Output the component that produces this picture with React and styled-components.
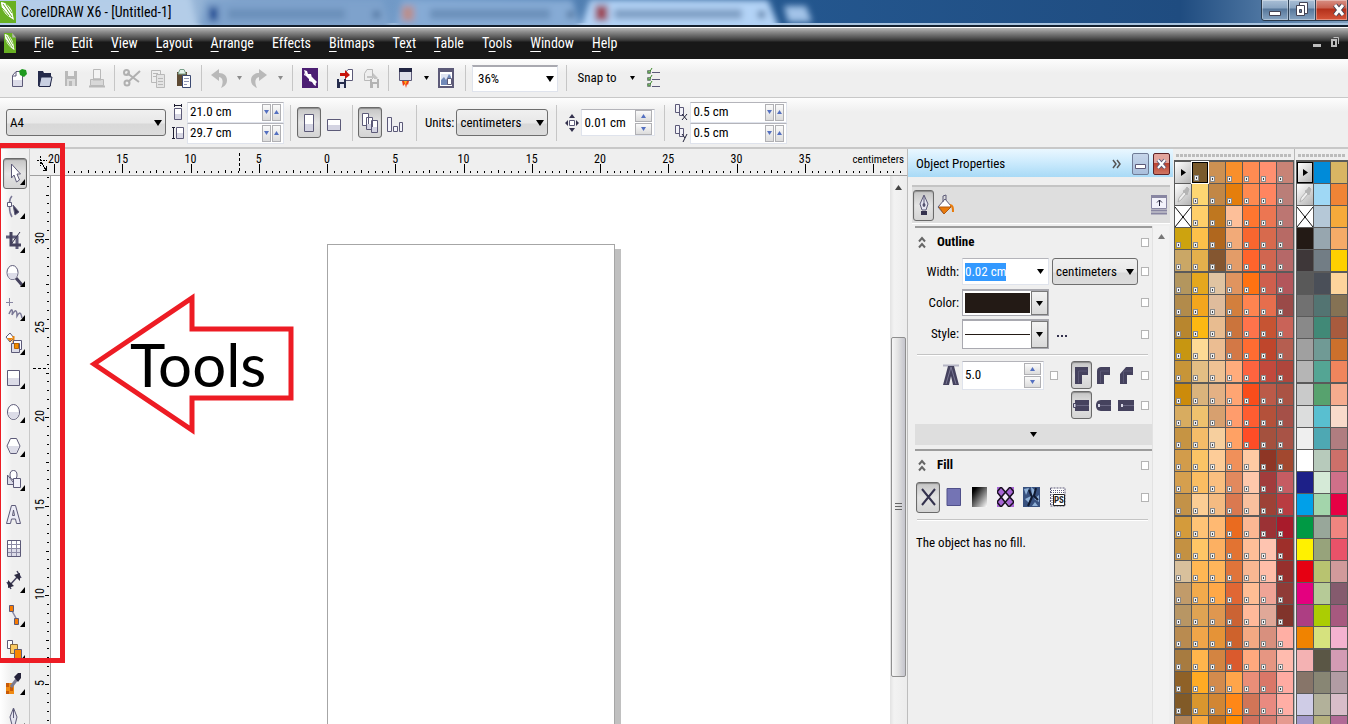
import React, { useEffect, useRef } from "react";
import styled, { createGlobalStyle, css } from "styled-components";

// ===== Data =====

const MENUS = [
  ["", "F", "ile"],
  ["", "E", "dit"],
  ["", "V", "iew"],
  ["", "L", "ayout"],
  ["", "A", "rrange"],
  ["Effe", "c", "ts"],
  ["", "B", "itmaps"],
  ["Te", "x", "t"],
  ["", "T", "able"],
  ["T", "o", "ols"],
  ["", "W", "indow"],
  ["", "H", "elp"],
];

const DOCUMENT_COLORS = `
7a5a2c cd9152 f98f2b ff8b52 ff9070 c88376
fdd672 c28746 e57e0c ff8a50 ff8560 ba7e78
ffcf6a bf771f fdbf99 ff7630 ec7652 bc7672
cda30f fdc04a b0671e f2aa78 f7662f d76a4d b76a65
caa766 e4b04c 845630 e39c68 ff642c d06650 b56868
b3965e e5a71e e0c4a2 e0945f ff7212 cf5f4d b2565b
b28b4b f4a61e dfbc9c d37f3d ff8450 e66e4d 9a4a48
b8862e fcb812 e8bc90 cb743c ff734b c65433 c96358
c79611 fdda95 ebbd92 d37846 ff6c32 bf462c b55e50
c79538 e3be84 efc294 ffac7c ff643f c2493c ae463c
cc8b0b dab37c e4b184 ffa573 f94d1b bb5a48 aa5344
d8ac60 efc26e d7a06f ff9c6c ff5d31 b4513a a55048
c69443 f4bc69 f6cf9e ffa164 ff4d27 a4513e a85346
d29c4b fbc466 fdcc98 f0905a fdcaa4 8e3625 a2482f
d59f4e fabd62 fabf80 e2895e fec8ab a13c3c c55c62
c39248 fbcd94 f4bb82 da7950 f9c09e 9d4136 b93c41
d49b3b fec376 ffb972 ea6b1f fbb793 9b3235 a81b2b
c49142 ffc666 fcb062 e27332 fdbe98 fec4b0 9e2f2a
d8c09c ffb754 ffb55b e0743a f8b792 ffbda8 962f2d
c19b6a f2aa4c ffa848 e06734 ffbd94 efa496 8f3b37
b89664 dfa353 df9750 cb6334 ffb99a e0a898 81342b
b98b50 f0a549 e59337 ce622c f3a983 d8907e ffafa4
a77b40 ffb54c d38441 da5a2d ffa97e e69682 ffbbae
8f6127 ffab24 d38b4d ffa54a ea8e78 da7768 ffaba2
815a27 d9962e d18634 ff8717 d17557 e98a80 ffaea5
b28458 f8a93e c07122 ff8a00 cf705c d57d70 e59a90
`;

const DEFAULT_COLORS = `
008bd9 d9b563
9fd8f5 f08436
b5c8d7 f6aa3b
231a15 97a6af f5ab68
3e3739 727d85 fdd000
595959 4a4f58 fdd49c
717171 537472 857254
898989 418977 a85b3e
a0a0a0 709a95 cc702c
b5b5b5 54a594 f0855d
c9caca 57a26e f6ab8e
dcdddd 59bfd0 f9dacb
efefef 4ea8b3 b07d80
ffffff b7cabb cd706a
1d2088 d5ead7 cf7089
00a0e9 a3d5ab e60044
009944 98a79a f08580
fff100 97a37b e95269
e60012 b8c370 d19a9b
e4007f b6ca97 855b6e
ad3e83 abcd03 a7597f
f08300 d6e27e f4b2d0
f4b2b3 5a5645 d39bb4
877569 888674 b19ca4
cfcce6 b2b19a d8bdc9
a399cb b5b07e b16a96
`;

const toRows = (text) =>
  text
    .trim()
    .split("\n")
    .map((line) => line.split(" ").map((c) => `#${c}`));

// ===== Global =====

const FONT = `"Roboto Condensed", Roboto, sans-serif`;

const GlobalStyle = createGlobalStyle`
  *, *::before, *::after {
    box-sizing: border-box;
  }

  body {
    margin: 0;
    font-family: ${FONT};
    font-size: 13px;
    line-height: 18px;
    color: #000;
    background: #efefef;
  }

  button, input, select {
    font: inherit;
    color: inherit;
    margin: 0;
    padding: 0;
  }

  button {
    white-space: nowrap;
  }

  svg {
    display: block;
    flex: none;
  }

  ::selection {
    background: #3399ff;
    color: #fff;
  }
`;

const App = styled.div`
  position: relative;
  display: flex;
  flex-direction: column;
  height: 100vh;
  overflow: hidden;
`;

// ===== Title bar =====

const TitleBar = styled.header`
  position: relative;
  display: flex;
  align-items: flex-start;
  height: 27px;
  flex: none;
  overflow: hidden;
  background: linear-gradient(90deg, #8fb0d2 0, #b4cce6 140px, #7fa3cb 240px, #6f98c6 420px, #5583b5 560px, #24578f 780px, #1f4c80 1180px, #4c74a0 1260px, #7d9dbd 100%);
  border-bottom: 2px solid #14202e;
  box-shadow: inset 0 -2px 0 #a9c4df;
`;

const TabGhosts = styled.svg`
  position: absolute;
  left: 0;
  top: 0;
`;

const AppTitle = styled.h1`
  position: relative;
  display: flex;
  align-items: center;
  gap: 5px;
  flex: 1;
  margin: 0;
  height: 23px;
  font-size: 14px;
  font-weight: 400;
`;

const WindowButtons = styled.div`
  position: relative;
  display: flex;
  height: 21px;
  border: 1px solid #2a3a4c;
  border-width: 0 0 1px 1px;
  border-radius: 0 0 0 4px;
  overflow: hidden;
`;

const WindowButton = styled.button`
  display: grid;
  place-items: center;
  width: ${(props) => (props.$close ? 32 : 27)}px;
  padding-left: ${(props) => (props.$close ? 14 : 0)}px;
  height: 20px;
  border: 0;
  border-right: 1px solid #2f4257;
  background: ${(props) =>
    props.$close
      ? "linear-gradient(#d78f84 0, #c8604f 8px, #b3301b 9px, #d6553a 100%)"
      : "linear-gradient(#a9bfd6 0, #8aa5c2 8px, #57779a 9px, #86a3c1 100%)"};
  box-shadow: inset 0 0 0 1px rgba(255, 255, 255, 0.35);
`;

// ===== Menu bar =====

const MenuBar = styled.nav`
  display: flex;
  align-items: center;
  height: 32px;
  flex: none;
  padding: 0 4px 2px;
  border-top: 1px solid #fff;
  background: linear-gradient(#b5b5b5 0, #8a8a8a 4px, #5a5a5a 9px, #303030 13px, #181818 14px);
`;

const MenuItem = styled.button`
  padding: 0 9px;
  border: 0;
  background: none;
  color: #fff;
  font-size: 14px;

  u {
    text-underline-offset: 3px;
  }
`;

const MenuItems = styled.div`
  display: flex;
  flex: 1;
  margin-left: 9px;
`;

const DocumentButton = styled.button`
  display: grid;
  place-items: center;
  width: 18px;
  height: 18px;
  border: 0;
  background: none;
`;

// ===== Toolbars =====

const Toolbar = styled.div`
  display: flex;
  align-items: center;
  flex: none;
  height: ${(props) => (props.$tall ? 51 : 39)}px;
  padding: 0 6px;
  background: linear-gradient(#fdfdfd 0, #efefef 14px);
  border-bottom: ${(props) => (props.$tall ? 2 : 1)}px solid #c8c8c8;
`;

const Separator = styled.i`
  flex: none;
  width: 1px;
  height: ${(props) => (props.$tall ? 36 : 26)}px;
  margin: 0 ${(props) => props.$space || 4}px;
  background: #c6c6c6;
`;

const pressed = css`
  border: 1px solid #6a6a6a;
  border-radius: 3px;
  background: linear-gradient(#c4c4c4, #e4e4e4 50%, #d4d4d4);
  box-shadow: inset 0 1px 1px #8a8a8a;
`;

const ToolButton = styled.button`
  display: grid;
  place-items: center;
  flex: none;
  width: ${(props) => props.$width || 26}px;
  height: 31px;
  border: 0;
  background: none;
  ${(props) => props.$on && pressed}
`;

const SelectBox = styled.span`
  position: relative;
  display: inline-flex;
  flex: none;
  width: ${(props) => props.$width}px;
  height: 27px;

  select {
    appearance: none;
    width: 100%;
    padding: 0 16px 0 3px;
    border: 1px solid #6e6e6e;
    border-radius: 3px;
    background: linear-gradient(#f0f0f0 0, #e8e8e8 13px, #d8d8d8 14px, #dcdcdc);
  }

  &::after {
    content: "";
    position: absolute;
    right: 4px;
    top: 11px;
    border: 4px solid transparent;
    border-top: 6px solid #000;
    border-bottom: 0;
    pointer-events: none;
  }

  ${(props) =>
    props.$flat &&
    css`
      select {
        padding-left: 5px;
        border: 1px solid #dfe3ec;
        border-top: 2px solid #a9a9b0;
        border-radius: 0;
        background: #fff;
      }
    `}
`;

const Field = styled.span`
  display: flex;
  align-items: center;
  flex: none;
  width: ${(props) => props.$width}px;
  height: ${(props) => props.$height}px;
  padding: 0 2px;
  border: 1px solid #dfe3ec;
  border-top-color: #b4b4ba;
  background: #fff;

  input {
    flex: 1;
    min-width: 0;
    height: 18px;
    border: 0;
    outline: 0;
    background: none;
  }
`;

const Spinners = styled.span`
  display: flex;
  flex-direction: ${(props) => (props.$stacked ? "column" : "row")};
  gap: 1px;
`;

const Spin = styled.button`
  display: grid;
  place-items: center;
  width: ${(props) => (props.$wide ? 17 : 9)}px;
  height: ${(props) => (props.$wide ? 12 : 17)}px;
  border: 1px solid #b0b0b4;
  background: linear-gradient(#fafafa, #dcdcdc);
`;

const PairStack = styled.div`
  display: grid;
  grid-template-columns: auto auto;
  align-items: center;
  column-gap: 2px;
`;

const Label = styled.label`
  text-align: right;
`;

// ===== Work area =====

const WorkArea = styled.main`
  display: flex;
  flex: 1;
  min-height: 0;
`;

const Toolbox = styled.aside`
  display: flex;
  flex-direction: column;
  flex: none;
  width: 30px;
  padding: 8px 0 0 3px;
  overflow: hidden;
  border-right: 1px solid #c8c8c8;
  background: linear-gradient(90deg, #fff, #efefef 12px);
`;

const Tool = styled.button`
  display: grid;
  place-items: center;
  flex: none;
  width: 24px;
  height: 31px;
  margin: 1px 0 2px;
  border: 0;
  background: none;
  ${(props) => props.$on && pressed}
`;

const Drawing = styled.section`
  display: grid;
  grid-template-columns: 21px 1fr 17px;
  grid-template-rows: 27px 1fr;
  flex: 1;
  min-width: 0;
  background: #efefef;
`;

const HorizontalRuler = styled.div`
  grid-column: 1 / -1;
  overflow: hidden;
  border-bottom: 1px solid #a0a0a0;
`;

const VerticalRuler = styled.div`
  overflow: hidden;
  border-right: 1px solid #a0a0a0;
`;

const RulerText = styled.text`
  font-family: ${FONT};
  font-size: ${(props) => (props.$unit ? 11 : 12)}px;
  text-anchor: ${(props) => (props.$unit ? "end" : "middle")};
`;

const Canvas = styled.div`
  position: relative;
  overflow: hidden;
  background: #fff;
`;

const Paper = styled.div`
  position: absolute;
  left: 276px;
  top: 68px;
  width: 288px;
  height: 530px;
  border: 1px solid #a6a6a6;
  background: #fff;
  box-shadow: 6px 5px 0 #c0c0c0;
`;

const ScrollTrack = styled.div`
  display: flex;
  flex-direction: column;
  align-items: center;
  padding-top: 9px;
  background: linear-gradient(90deg, #e2e2e2, #f2f2f2 4px, #ececec);
`;

const ScrollThumb = styled.div`
  display: grid;
  place-items: center;
  width: 15px;
  height: 340px;
  margin-top: 147px;
  border: 1px solid #8f8f8f;
  border-radius: 2px;
  background: linear-gradient(90deg, #f6f6f6, #e2e2e2 6px, #c4c4cc);
`;

// ===== Docker =====

const Docker = styled.aside`
  display: flex;
  flex-direction: column;
  flex: none;
  width: 266px;
  border-left: 1px solid #bdbdbd;
`;

const DockerTitle = styled.div`
  display: flex;
  align-items: center;
  gap: 4px;
  height: 28px;
  padding: 2px 3px 0 8px;
  background: linear-gradient(#eaf7ff, #cdebfd 13px, #a8daf6);

  h2 {
    flex: 1;
    margin: 0;
    font-size: 13px;
    font-weight: 400;
  }
`;

const DockerButton = styled.button`
  display: grid;
  place-items: center;
  width: ${(props) => (props.$bare ? 22 : 17)}px;
  height: 22px;
  border: ${(props) => (props.$bare ? "0" : "1px solid")};
  border-color: ${(props) => (props.$red ? "#5c2226" : "#707c96")};
  border-radius: 2px;
  background: ${(props) =>
    props.$bare ? "none" : props.$red ? "linear-gradient(#e2a49c 9px, #b9412f 9px, #cf7562)" : "linear-gradient(#c6d6ea, #a9bfdc)"};
`;

const DockerTabs = styled.div`
  display: flex;
  align-items: center;
  height: 39px;
  margin: 8px 3px 0 4px;
  padding: 0 1px;
  border-top: 2px solid #c4c4c4;
  border-bottom: 1px solid #fff;
  background: #dedede;

  button:last-child {
    margin-left: auto;
  }
`;

const DockerBody = styled.div`
  display: flex;
  flex: 1;
  margin: 2px 4px 0 7px;
  min-height: 0;
`;

const DockerContent = styled.div`
  flex: 1;
  min-width: 0;
`;

const DockerScroll = styled.div`
  flex: none;
  width: 17px;
  padding: 8px 0 0 5px;
  border-left: 1px solid #e2e2e2;
  background: #f2f2f2;
`;

const Section = styled.section`
  border-top: 2px solid #9c9c9c;
`;

const SectionHead = styled.div`
  display: flex;
  align-items: center;
  height: 28px;
  padding: 0 3px;

  h3 {
    flex: 1;
    margin: 0 0 0 11px;
    font-size: 13px;
    font-weight: 700;
  }
`;

const Mark = styled.input`
  appearance: none;
  flex: none;
  width: 8px;
  height: 9px;
  margin-left: auto;
  border: 1px solid #b4b4b4;
  background: #fff;
`;

const FormRow = styled.div`
  display: grid;
  grid-template-columns: 44px 87px 86px 1fr;
  align-items: center;
  column-gap: 3px;
  height: ${(props) => props.$height}px;
  padding-right: 3px;
`;

const ColorCombo = styled.button`
  display: flex;
  align-items: center;
  justify-content: space-between;
  width: 87px;
  height: ${(props) => props.$height}px;
  padding-left: 2px;
  border: 1px solid #a9a9b0;
  border-width: 2px 1px 1px;
  background: #fff;
`;

const Swatch = styled.span`
  width: 65px;
  height: ${(props) => (props.$line ? 1 : 20)}px;
  background: #231a15;
`;

const DropCap = styled.span`
  display: grid;
  place-items: center;
  align-self: stretch;
  width: 17px;
  border: 1px solid #7a7a7a;
  background: linear-gradient(#f2f2f2, #dadada);
`;

const Rule = styled.hr`
  height: 2px;
  margin: ${(props) => props.$space || 0}px 4px 0 2px;
  border: 0;
  border-top: 1px solid #c4c4c4;
  border-bottom: 1px solid #fff;
`;

const StrokeOptions = styled.div`
  display: grid;
  grid-template-columns: 1fr auto;
  padding: 4px 3px 4px 28px;
`;

const MiterRow = styled.div`
  display: flex;
  align-items: center;
  gap: 3px;
  height: 30px;

  input[type="checkbox"] {
    margin-left: 3px;
  }
`;

const JoinRow = styled.div`
  display: flex;
  align-items: center;
  height: 30px;
  grid-column: 2;

  button {
    width: 23px;
    height: 28px;
  }

  button:first-child {
    width: 21px;
  }

  input {
    margin-left: 3px;
  }
`;

const Expander = styled.button`
  display: grid;
  place-items: center;
  width: 100%;
  height: 21px;
  margin-bottom: 4px;
  border: 0;
  background: #dedede;
`;

const FillRow = styled.div`
  display: flex;
  align-items: center;
  height: 36px;
  padding: 0 3px 0 1px;

  button {
    margin-right: 1px;
  }
`;

const Note = styled.p`
  margin: 13px 0 0 1px;
`;

// ===== Palette =====

const PaletteBox = styled.aside`
  flex: none;
  overflow: hidden;
  padding-left: 1px;
  border-left: ${(props) => (props.$divided ? 1 : 0)}px solid #b8b8b8;
`;

const PaletteGrip = styled.div`
  height: 3px;
  margin: 5px 2px 3px;
  background: repeating-linear-gradient(90deg, #bcbcbc 0 3px, transparent 3px 4px);
`;

const Swatches = styled.div`
  padding: 2px 1px 0 1px;
  background: #5a5a5a;
`;

const SwatchRow = styled.div`
  display: flex;
  gap: 1px;
  height: 21px;
  margin-bottom: ${(props) => (props.$gap ? 2 : 1)}px;
`;

const ColorCell = styled.button`
  display: flex;
  align-items: flex-end;
  width: 16px;
  height: 21px;
  padding: 0 0 1px 1px;
  border: 0;
  ${(props) =>
    props.$selected &&
    css`
      border: 1px solid #000;
      outline: 1px solid #fff;
    `}
`;

const SpotMark = styled.i`
  width: 5px;
  height: 6px;
  border: 1px solid #8a8a8a;
  background: linear-gradient(#444, #444) center / 1px 2px no-repeat #eee;
`;

const PaletteButton = styled.button`
  display: grid;
  place-items: center;
  width: 16px;
  height: 21px;
  border: ${(props) => (props.$boxed ? "1px solid #000" : "0")};
  background: ${(props) => (props.$plain ? "#fff" : "linear-gradient(135deg, #fff, #b4b4b4)")};
`;

// ===== Annotations =====

const ToolboxFrame = styled.div`
  position: absolute;
  left: -4px;
  top: 143px;
  width: 69px;
  height: 520px;
  border: 5px solid #ed1c24;
  pointer-events: none;
`;

const Callout = styled.div`
  position: absolute;
  left: 86px;
  top: 293px;
  display: grid;
  align-items: center;
  pointer-events: none;

  > * {
    grid-area: 1 / 1;
  }

  span {
    padding-left: 44px;
    font-family: Lato, sans-serif;
    font-size: 60px;
    line-height: 60px;
  }
`;

// ===== Icons =====

const INK = "#5c5a78";
const GREY = "#b9b9b9";

const Icon = ({ w = 18, h = 22, children, ...rest }) => (
  <svg width={w} height={h} viewBox={`0 0 ${w} ${h}`} fill="none" stroke={INK} aria-hidden="true" {...rest}>
    {children}
  </svg>
);

const Down = ({ size = 3, color = "#000" }) => (
  <Icon w={size * 2 + 1} h={size + 2} stroke="none">
    <path d={`M0 0H${size * 2 + 1}L${size + 0.5} ${size + 2}Z`} fill={color} />
  </Icon>
);

const Up = ({ size = 3, color = "#000" }) => (
  <Icon w={size * 2 + 1} h={size + 2} stroke="none">
    <path d={`M0 ${size + 2}H${size * 2 + 1}L${size + 0.5} 0Z`} fill={color} />
  </Icon>
);

const CorelLogo = ({ w = 16, h = 22, notch }) => (
  <Icon w={w} h={h} viewBox="0 0 16 22" preserveAspectRatio="none" stroke="none">
    <path d={notch ? "M0 0H11L16 5V22H0Z" : "M0 0H16V22H0Z"} fill="#68b022" />
    <path d="M1 1C5 1 10 5 12 10L14 19L8 15C4 12 1 7 1 1Z" fill="#fff" />
    <path d="M3 3L12 16M6 3L12 12M2 7L9 15" stroke="#68b022" strokeWidth="1" />
    {notch && <path d="M11 0V5H16Z" fill="#b5b5b5" />}
  </Icon>
);

const NewIcon = () => (
  <Icon>
    <path d="M2.500 8.500L6 4.500H12.500V19.500H2.500Z" fill="#fff" />
    <path d="M3 13H12V19H3Z" fill="#dcdce8" stroke="none" />
    <path d="M2.500 9H6V5" />
    <path d="M12 2l4 1 1 4-3 3-4-2-1-4z" fill="#1f9a1f" stroke="none" />
  </Icon>
);

const OpenIcon = () => (
  <Icon>
    <path d="M2 4H7L8 6H15V19H2Z" fill="#242a4a" stroke="none" />
    <path d="M5 10H16L14 19.500H3Z" fill="#c9d0e2" stroke="#242a4a" />
  </Icon>
);

const SaveIcon = () => (
  <Icon stroke="none">
    <path d="M3 4H15V19H3Z" fill={GREY} />
    <path d="M6 4H12V9H6Z" fill="#efefef" />
    <path d="M5 12H13V19H5Z" fill="#dcdcdc" />
    <path d="M7 14H10V19H7Z" fill={GREY} />
  </Icon>
);

const PrintIcon = () => (
  <Icon stroke={GREY}>
    <path d="M5.500 2.500H12.500V12H5.500Z" fill="#f4f4f4" />
    <path d="M2.500 12.500H15.500V18.500H2.500Z" fill="#d8d8d8" />
    <path d="M1 19.500H17M5 12.500H13" strokeWidth="2" />
  </Icon>
);

const CutIcon = () => (
  <Icon stroke="#b0b0b0" strokeWidth="2">
    <path d="M4 6L16 15M17 4L5 15" />
    <ellipse cx="3.500" cy="5.500" rx="2.500" ry="2.500" />
    <ellipse cx="4" cy="16" rx="2.500" ry="2.500" />
  </Icon>
);

const CopyIcon = () => (
  <Icon stroke={GREY}>
    <path d="M2.500 3.500H11.500V15.500H2.500Z" fill="#eee" />
    <path d="M7.500 7.500H15.500V20.500H7.500Z" fill="#e4e4e4" />
    <path d="M4 6.500H9M4 9.500H7M9 11.500H14M9 14.500H14M9 17.500H14" />
  </Icon>
);

const PasteIcon = () => (
  <Icon>
    <path d="M2 5H12V19H2Z" fill="#5d4a33" stroke="none" />
    <path d="M3 7L5 2.500H9L11 7Z" fill="#e5f3ea" stroke="#7aa08a" />
    <path d="M7.500 8.500H15.500V20.500H7.500Z" fill="#fff" stroke="#3c4a72" />
    <path d="M9 11.500H14M9 14.500H14M9 17.500H12" stroke="#8f97b8" />
  </Icon>
);

const UndoIcon = ({ flip }) => (
  <Icon stroke="none">
    <g transform={flip ? "translate(18 0) scale(-1 1)" : undefined}>
      <path d="M1 8L9 2V6C14 6 17 9 17 13C17 17 15 19 11 21C13 17 14 11 9 10V14Z" fill={GREY} />
    </g>
  </Icon>
);

const ConnectIcon = () => (
  <Icon stroke="none">
    <path d="M1 1H17V21H1Z" fill="#4c1f73" />
    <path d="M3 3L6 4L7 7L10 7L11 11L8 12L5 9Z" fill="#fff" />
    <path d="M15 19L13 18L11 15L8 14L8 11L11 10L14 13Z" fill="#fff" />
    <path d="M4 5L3 8L5 9ZM14 17L16 15L14 13Z" fill="#fff" />
  </Icon>
);

const ImportIcon = () => (
  <Icon>
    <path d="M9.500 5.500L12 2.500H16.500V13.500H9.500Z" fill="#fff" />
    <path d="M4 6H9V3L14 8L9 12V9H4Z" fill="#c8140c" stroke="none" />
    <path d="M1 12H10V21H1Z" fill="#252c4c" stroke="none" />
    <path d="M3 12H8V15H3ZM4 17H8V21H4Z" fill="#e4e6f0" stroke="none" />
  </Icon>
);

const ExportIcon = () => (
  <Icon stroke={GREY}>
    <path d="M2.500 6.500L5 2.500H10.500V13.500H2.500Z" fill="#eee" />
    <path d="M5 9H11V6L16 11L12 14V11H5Z" fill="#c4c4c4" stroke="none" />
    <path d="M8 12H17V21H8Z" fill="#b4b4b4" stroke="none" />
    <path d="M10 12H15V15H10ZM11 17H15V21H11Z" fill="#eee" stroke="none" />
  </Icon>
);

const LaunchIcon = () => (
  <Icon>
    <path d="M2.500 1.500H14.500V13.500H2.500Z" fill="#dfe1ea" />
    <path d="M2 1H15V5H2Z" fill="#222644" stroke="none" />
    <path d="M5 14H12L11 18L10 17L9 21L8 17L6 19Z" fill="#f13b12" stroke="none" />
    <path d="M7 14H10L8.500 18Z" fill="#ffb21c" stroke="none" />
  </Icon>
);

const WelcomeIcon = () => (
  <Icon>
    <path d="M2 2H16V20H2Z" fill="#fff" strokeWidth="2" />
    <path d="M2 2H16V5H2Z" fill={INK} stroke="none" />
    <path d="M4 7H14V18H4Z" fill="#dfe4f2" stroke="none" />
    <path d="M4 13L7 10L9 13L12 7L14 10V18H4Z" fill="#7089b8" stroke="none" />
    <path d="M10.500 11.500H14.500V17.500H10.500Z" fill="#fff" />
  </Icon>
);

const ChecksIcon = () => (
  <Icon w={14} h={20}>
    <path d="M6 4.500H14M6 11.500H14M6 18.500H14" />
    <path d="M1.500 2.500H4.500V5.500H1.500ZM1.500 9.500H4.500V12.500H1.500ZM1.500 15.500H4.500V18.500H1.500Z" stroke="#7a8a80" />
    <path d="M2 3L3 5L6 0M2 10L3 12L6 7M2 16L3 18L6 13" stroke="#3c8a2a" />
  </Icon>
);

const PageSizeIcon = ({ high }) => (
  <Icon w={14} h={18}>
    <path d={high ? "M5.500 3.500H12.500V14.500H5.500Z" : "M3.500 5.500H10.500V16.500H3.500Z"} fill="#fff" />
    <path d={high ? "M6 9H12V14H6Z" : "M4 11H10V16H4Z"} fill="#d8d8e4" stroke="none" />
    <path d={high ? "M2.500 3V15M1 3.500H4M1 14.500H4" : "M3 2.500H11M3.500 1V4M10.500 1V4"} stroke="#1c1c30" />
  </Icon>
);

const SheetIcon = ({ wide }) => (
  <Icon w={16} h={20}>
    <path d={wide ? "M1.500 6.500H14.500V17.500H1.500Z" : "M3.500 1.500H12.500V18.500H3.500Z"} fill="#fff" />
    <path d={wide ? "M2 12H14V17H2Z" : "M4 11H12V18H4Z"} fill="#d4d4e2" stroke="none" />
  </Icon>
);

const AllPagesIcon = () => (
  <Icon w={18} h={22}>
    <path d="M1.500 1.500H7.500V13.500H1.500ZM5.500 5.500H11.500V17.500H5.500ZM10.500 8.500H16.500V20.500H10.500Z" fill="#fff" />
    <path d="M6 12H10V17H6ZM11 15H16V20H11Z" fill="#d4d4e2" stroke="none" />
  </Icon>
);

const ThisPageIcon = () => (
  <Icon w={18} h={20}>
    <path d="M1.500 4.500H5.500V18.500H1.500ZM7.500 13.500H11.500V18.500H7.500ZM13.500 9.500H16.500V18.500H13.500Z" fill="#f4f4fa" />
  </Icon>
);

const NudgeIcon = () => (
  <Icon w={14} h={18} stroke="none" fill="#34324e">
    <path d="M7 0L10 4H4ZM7 18L10 14H4ZM0 9L3 6V12ZM14 9L11 6V12Z" />
    <path d="M4.500 6.500H9.500V11.500H4.500Z" fill="#fff" stroke={INK} />
  </Icon>
);

const DuplicateIcon = ({ axis }) => (
  <Icon w={14} h={18}>
    <path d="M1.500 1.500H5.500V9.500H1.500ZM5.500 4.500H9.500V12.500H5.500Z" fill="#f2f2f8" />
    <path d={axis === "x" ? "M8 11L13 17M13 11L8 17" : "M8 10L11 14L13 10M11 14L9 18"} stroke="#22223a" />
  </Icon>
);

const NoneIcon = () => (
  <Icon w={16} h={20} stroke="#111">
    <path d="M0 0L16 20M16 0L0 20" />
    <path d="M7 9H9V11H7Z" fill="#111" stroke="none" />
  </Icon>
);

const DropperIcon = () => (
  <Icon w={14} h={18} stroke="#b4b4b4">
    <path d="M2 16L3 12L8 6L10 8L5 14Z" fill="#eee" />
    <path d="M7 5L9 4L11 1L13 3L12 6L11 9Z" fill="#b4b4b4" />
  </Icon>
);

const NibIcon = () => (
  <Icon w={14} h={22}>
    <path d="M7 1L3 10L5 16H9L11 10Z" fill="#e4e4f0" />
    <path d="M7 2V11" />
    <path d="M4 17H10V21H4Z" fill="#34324e" stroke="none" />
    <ellipse cx="7" cy="11" rx="1" ry="1.500" fill="#34324e" />
  </Icon>
);

const BucketIcon = () => (
  <Icon w={18} h={22}>
    <path d="M8 5L14 12L7 20L1 13Z" fill="#fff" />
    <path d="M2 13H14L7 20Z" fill="#e87b0c" stroke="#b35a10" />
    <path d="M6 8V2L9 1V6" />
    <path d="M13 11C16 11 16 14 16 18" stroke="#e87b0c" strokeWidth="2" />
  </Icon>
);

const PinIcon = () => (
  <Icon w={17} h={20}>
    <path d="M0.500 0.500H15.500V13.500H0.500Z" fill="#f2f2fa" stroke="#8886a2" />
    <path d="M0 0H16V3H0Z" fill="#8886a2" stroke="none" />
    <path d="M8.500 5V11M6 7.500L8.500 5L11 7.500" stroke="#22223a" />
    <path d="M0 15.500H16M0 18.500H16" stroke="#8886a2" strokeWidth="2" />
  </Icon>
);

const ChevronsUp = () => (
  <Icon w={8} h={13} stroke="#666" strokeWidth="2">
    <path d="M1 5.500L4 2L7 5.500M1 11.500L4 8L7 11.500" />
  </Icon>
);

const MiterIcon = () => (
  <Icon w={16} h={22} stroke="none">
    <path d="M0 1.500H16" stroke="#b4b4c4" strokeWidth="2" />
    <path d="M5 2H11L16 21H10L8 12L6 21H0Z" fill="#45425e" />
    <path d="M8 3L3 20M8 3L13 20" stroke="#7a7894" />
  </Icon>
);

const JOINS = ["M2 2H15V10H9V19H2Z", "M2 19V6C2 3 4 2 6 2H15V10H9V19Z", "M2 19V9L8 2H15V10H9V19Z"];

const JoinIcon = ({ kind }) => (
  <Icon w={17} h={20} stroke="none">
    <path d={JOINS[kind]} fill="#45425e" />
    <path d="M5.500 18V6H14" stroke="#5a5774" fill="none" />
  </Icon>
);

const CAPS = ["M2 1H16V12H2Z", "M6 1H16V12H6C2 12 1 9 1 6.500C1 4 2 1 6 1Z", "M0 1H16V12H0Z"];

const CapIcon = ({ kind }) => (
  <Icon w={17} h={13} stroke="none">
    <path d={CAPS[kind]} fill="#45425e" />
    <path d="M3 6.500H16" stroke="#6b6884" />
    <path d={kind === 0 ? "M0.500 4.500H3V8.500H0.500Z" : "M3 5H5V8H3Z"} fill="#d8d8e6" stroke={kind === 0 ? "#45425e" : "none"} />
  </Icon>
);

const FillIcon = ({ kind }) => (
  <Icon w={17} h={20} stroke="none">
    <defs>
      <linearGradient id="fountain" x1="0" y1="0" x2="1" y2="1">
        <stop offset="0.150" stopColor="#000" />
        <stop offset="1" stopColor="#fff" />
      </linearGradient>
    </defs>
    {kind === "none" && <path d="M2 2L15 18M15 2L2 18" stroke="#34324e" strokeWidth="2" />}
    {kind === "uniform" && <path d="M2 1.500H15.500V18.500H2Z" fill="#7474b4" stroke="#50508a" />}
    {kind === "fountain" && <path d="M1 0H16V20H1Z" fill="url(#fountain)" />}
    {kind === "pattern" && (
      <>
        <path d="M0 0H17V20H0Z" fill="#a866d6" />
        <path d="M4 0H13L8.500 6ZM4 20H13L8.500 14ZM0 5L4 10L0 15ZM8.500 5L12 10L8.500 15L5 10ZM17 5L13 10L17 15Z" fill="#f4ecfa" />
        <path d="M0 5L4 0M0 5L12 20M4 20L17 5M0 15L13 0M4 0L17 15M17 5L13 0M0 15L4 20M12 20L17 15" stroke="#18101f" strokeWidth="1.500" />
      </>
    )}
    {kind === "texture" && (
      <>
        <path d="M0 0H17V20H0Z" fill="#38517f" />
        <path d="M1 2L6 1L3 8ZM8 0L13 4L9 9ZM2 12L8 9L6 16ZM11 12L16 8V15ZM9 19L12 15L15 19Z" fill="#8fb0d6" />
        <path d="M6 3L9 10L5 19M13 1L11 9L15 13" stroke="#101a30" strokeWidth="2" />
      </>
    )}
    {kind === "ps" && (
      <>
        <path d="M1.500 1H16V19H1.500Z" fill="#fff" stroke={INK} strokeDasharray="2 1" />
        <path d="M2 3.500H16M2 5.500H16M3 7V19" stroke={INK} strokeDasharray="1 1" />
        <path d="M4.500 7.500H15.500V18.500H4.500Z" fill="#fff" stroke="#222" />
        <text x="5" y="16" fontSize="9" fontFamily={FONT} fontWeight="700" fill="#222">
          PS
        </text>
      </>
    )}
  </Icon>
);

// Toolbox glyphs share one box, the black corner marks a flyout
const ToolIcon = ({ flyout = true, children }) => (
  <Icon w={20} h={26}>
    {children}
    {flyout && <path d="M20 18V24H15Z" fill="#000" stroke="none" />}
  </Icon>
);

const HALF = { fill: "#dcdce8", stroke: "none" };

const TOOLS = [
  ["Pick", <path d="M6.500 3V17L9 14L11.500 21L14.500 19L12 13H15.500Z" fill="#fff" />],
  [
    "Shape",
    <>
      <path d="M7 1C5 3 4.500 6 4.500 8M4.500 12C4.500 16 5 19 7 22" stroke="#7a7896" strokeWidth="1.500" />
      <path d="M2.500 7.500H6.500V11.500H2.500Z" fill="#fff" />
      <path d="M8 10L14 17L10 20Z" fill="#34324e" />
    </>,
  ],
  [
    "Crop",
    <>
      <path d="M1 8H12V20" strokeWidth="3" />
      <path d="M6 3V16H16" strokeWidth="3" stroke="#45425e" />
      <path d="M15 3L7 14" stroke="#34324e" />
    </>,
  ],
  [
    "Zoom",
    <>
      <path d="M11 15L17 22" strokeWidth="3" stroke="#45425e" />
      <ellipse cx="7.500" cy="9.500" rx="5.500" ry="7" fill="#fff" />
      <path d="M2.500 10H12.500C12 14 10 16 7.500 16C5 16 3 14 2.500 10Z" {...HALF} />
    </>,
  ],
  [
    "Freehand",
    <>
      <path d="M4.500 1V9M1 5.500H8" stroke="#8886a2" />
      <path d="M4 17C7 10 8 13 7 18C11 11 12 14 12 19C15 14 16 16 17 21" strokeWidth="1.500" stroke="#7a7896" />
    </>,
  ],
  [
    "Smart Fill",
    <>
      <path d="M5 2L9 7L5 11L1 6Z" fill="#fff" />
      <path d="M2 7H8L5 10.500Z" fill="#e8850f" stroke="none" />
      <path d="M8.500 5V12" stroke="#e8850f" strokeWidth="2" />
      <path d="M8.500 9.500H16.500V18.500H8.500Z" fill="#f8f8ff" />
      <path d="M6.500 12.500H14.500V21.500H6.500Z" fill="#dcdce8" />
      <path d="M9.500 12.500H13.500V17.500H9.500Z" fill="#f18a00" stroke="#b96500" />
    </>,
  ],
  [
    "Rectangle",
    <>
      <path d="M2.500 5.500H14.500V20.500H2.500Z" fill="#fff" />
      <path d="M3 13H14V20H3Z" {...HALF} />
    </>,
  ],
  [
    "Ellipse",
    <>
      <ellipse cx="8.500" cy="13" rx="6" ry="7.500" fill="#fff" />
      <path d="M3 13H14C14 17 11 20 8.500 20C6 20 3 17 3 13Z" {...HALF} />
    </>,
  ],
  [
    "Polygon",
    <>
      <path d="M5.500 5.500H11.500L15 13L11.500 20.500H5.500L2 13Z" fill="#fff" />
      <path d="M3 13H14L11 20H6Z" {...HALF} />
    </>,
  ],
  [
    "Basic Shapes",
    <>
      <path d="M2.500 8L10 17.500H2.500Z" fill="#dcdce8" />
      <ellipse cx="8.500" cy="8" rx="3.500" ry="4.500" fill="#fff" />
      <path d="M8.500 11.500H15.500V20.500H8.500Z" fill="#f2f2fa" />
    </>,
  ],
  ["Text", <path d="M6.500 4.500H10.500L15.500 22.500H11.500L10.500 18H6.500L5.500 22.500H1.500ZM8.500 9L7.500 14.500H9.500Z" fill="#ececf6" />, false],
  [
    "Table",
    <>
      <path d="M2.500 5.500H15.500V21.500H2.500Z" fill="#fff" />
      <path d="M3 13H15V21H3Z" {...HALF} />
      <path d="M3 9.500H15M3 13.500H15M3 17.500H15M6.500 6V21M11.500 6V21" stroke="#8d8ba6" />
    </>,
    false,
  ],
  [
    "Dimension",
    <>
      <path d="M4 17L14 6M12 2L16 9M2 13L6 20" stroke="#45425e" strokeWidth="1.500" />
      <path d="M9 6L15 4L15 12ZM9 17L3 19L3 11Z" stroke="none" fill="#2c2a40" />
    </>,
  ],
  [
    "Connector",
    <>
      <path d="M6 6L12 17" stroke="#8886a2" strokeWidth="1.500" />
      <path d="M4.500 2.500H8.500V8.500H4.500ZM9.500 15.500H13.500V21.500H9.500Z" fill="#f77a00" />
    </>,
  ],
  [
    "Blend",
    <>
      <path d="M2.500 3.500H7.500V11.500H2.500Z" fill="#fff" />
      <path d="M5.500 7.500H12.500V16.500H5.500Z" fill="#fccb63" stroke="#8a6a3c" />
      <path d="M9.500 12.500H16.500V21.500H9.500Z" fill="#f88600" />
    </>,
  ],
  [
    "Color Eyedropper",
    <>
      <path d="M1 12H9V23H1Z" fill="#f08a12" stroke="none" />
      <path d="M1 12H4V16H1ZM5 16H8V20H5ZM1 20H4V23H1Z" fill="#c85a08" stroke="none" />
      <path d="M6 16L12 8" stroke="#7b7a90" strokeWidth="3" />
      <path d="M9 6L13 2H16V7L13 11Z" fill="#25233a" stroke="none" />
    </>,
  ],
  [
    "Outline Pen",
    <>
      <path d="M8.500 3L5 12L7 20H10L12 12Z" fill="#e4e4f0" />
      <path d="M8.500 4V13" />
    </>,
  ],
];

// ===== Rulers =====

const CM_X = 13.65;
const CM_Y = 17.8;

// Origin of the sheet, measured from each ruler's own start
const ORIGIN_X = 297;
const ORIGIN_Y = 597;

const range = (from, to) => Array.from({ length: to - from + 1 }, (_, i) => from + i);

const RulerX = () => (
  <Icon w={1600} h={26} stroke="#000" shapeRendering="crispEdges">
    {range(-38, 100).map((n) => {
      const x = Math.round(ORIGIN_X + (n * CM_X) / 2) + 0.5;
      const top = n % 10 === 0 ? 15 : n % 5 === 0 ? 21 : 22;
      return <path key={n} d={`M${x} ${top}V24`} />;
    })}
    <path d="M24.500 15V24" />
    {range(-4, 7).map((n) => (
      <RulerText key={n} x={ORIGIN_X + n * 5 * CM_X} y={14} stroke="none" fill="#000">
        {Math.abs(n * 5)}
      </RulerText>
    ))}
    <RulerText x={874} y={14} $unit stroke="none" fill="#000">
      centimeters
    </RulerText>
    <path d="M209.500 4V24" strokeDasharray="3 2" />
    <path d="M7 11.500H17M10.500 7V17" strokeDasharray="2 1" />
    <path d="M11 13L16 21M16.500 17V22M13 21.500H17" />
  </Icon>
);

const RulerY = () => (
  <Icon w={20} h={1200} stroke="#000" shapeRendering="crispEdges">
    {range(-60, 67).map((n) => {
      const y = Math.round(ORIGIN_Y - (n * CM_Y) / 2) + 0.5;
      const left = n % 10 === 0 ? 15 : n % 5 === 0 ? 16 : 17;
      return <path key={n} d={`M${left} ${y}H19`} />;
    })}
    {range(1, 6).map((n) => (
      <RulerText key={n} transform={`translate(14 ${ORIGIN_Y - n * 5 * CM_Y - 1}) rotate(-90)`} stroke="none" fill="#000">
        {n * 5}
      </RulerText>
    ))}
    <path d="M3 192.500H19" strokeDasharray="3 2" />
  </Icon>
);

// ===== Parts =====

const Select = ({ label, id, options, ...rest }) => (
  <SelectBox {...rest}>
    <select id={id} aria-label={label}>
      {options.map((o) => (
        <option key={o}>{o}</option>
      ))}
    </select>
  </SelectBox>
);

const NumberField = ({ label, value, width, height = 21, stacked }) => (
  <Field $width={width} $height={height}>
    <input type="text" aria-label={label} defaultValue={value} />
    <Spinners $stacked={stacked}>
      {stacked ? (
        <>
          <Spin $wide aria-label={`Increase ${label}`}>
            <Up size={2} color="#5470c0" />
          </Spin>
          <Spin $wide aria-label={`Decrease ${label}`}>
            <Down size={2} color="#5470c0" />
          </Spin>
        </>
      ) : (
        <>
          <Spin aria-label={`Decrease ${label}`}>
            <Down size={2} color="#5470c0" />
          </Spin>
          <Spin aria-label={`Increase ${label}`}>
            <Up size={2} color="#5470c0" />
          </Spin>
        </>
      )}
    </Spinners>
  </Field>
);

const Palette = ({ colors, spots, divided }) => (
  <PaletteBox $divided={divided} aria-label="Color palette">
    <PaletteGrip />
    <Swatches>
      {toRows(colors).map((row, r) => (
        <SwatchRow key={r} $gap={[4, 9, 15, 21].includes(r)}>
          {r === 0 && (
            <PaletteButton aria-label="Palette menu" $boxed={!spots}>
              <Icon w={5} h={7} stroke="none">
                <path d="M0 0L5 3.500L0 7Z" fill="#000" />
              </Icon>
            </PaletteButton>
          )}
          {r === 1 && (
            <PaletteButton aria-label="Pick color">
              <DropperIcon />
            </PaletteButton>
          )}
          {r === 2 && (
            <PaletteButton aria-label="No color" $plain>
              <NoneIcon />
            </PaletteButton>
          )}
          {row.map((color, c) => (
            <ColorCell key={c} aria-label={color} style={{ backgroundColor: color }} $selected={spots && r === 0 && c === 0}>
              {spots && <SpotMark />}
            </ColorCell>
          ))}
        </SwatchRow>
      ))}
    </Swatches>
  </PaletteBox>
);

const StandardBar = () => (
  <Toolbar>
    <ToolButton aria-label="New"><NewIcon /></ToolButton>
    <ToolButton aria-label="Open"><OpenIcon /></ToolButton>
    <ToolButton aria-label="Save"><SaveIcon /></ToolButton>
    <ToolButton aria-label="Print"><PrintIcon /></ToolButton>
    <Separator />
    <ToolButton aria-label="Cut"><CutIcon /></ToolButton>
    <ToolButton aria-label="Copy"><CopyIcon /></ToolButton>
    <ToolButton aria-label="Paste"><PasteIcon /></ToolButton>
    <Separator />
    <ToolButton aria-label="Undo"><UndoIcon /></ToolButton>
    <ToolButton aria-label="Undo list" $width={14}><Down size={2} color="#8c8c8c" /></ToolButton>
    <ToolButton aria-label="Redo"><UndoIcon flip /></ToolButton>
    <ToolButton aria-label="Redo list" $width={16}><Down size={2} color="#8c8c8c" /></ToolButton>
    <Separator />
    <ToolButton aria-label="Connect"><ConnectIcon /></ToolButton>
    <Separator />
    <ToolButton aria-label="Import"><ImportIcon /></ToolButton>
    <ToolButton aria-label="Export"><ExportIcon /></ToolButton>
    <Separator />
    <ToolButton aria-label="Application launcher"><LaunchIcon /></ToolButton>
    <ToolButton aria-label="Launcher list" $width={14}><Down size={2} /></ToolButton>
    <ToolButton aria-label="Welcome screen"><WelcomeIcon /></ToolButton>
    <Separator $space={6} />
    <Select $width={86} $flat label="Zoom level" options={["36%", "50%", "100%"]} />
    <Separator $space={8} />
    <ToolButton $width={44}>Snap to</ToolButton>
    <ToolButton aria-label="Snap list" $width={26}><Down size={2} /></ToolButton>
    <ToolButton aria-label="Options" $width={16}><ChecksIcon /></ToolButton>
  </Toolbar>
);

const PropertyGroup = styled.div`
  display: flex;
  align-items: center;
  gap: ${(props) => props.$gap}px;
`;

const PropertyBar = () => (
  <Toolbar $tall>
    <PropertyGroup $gap={5}>
      <Select $width={160} label="Page size" options={["A4", "A5", "Letter"]} />
      <PairStack>
        <PageSizeIcon />
        <NumberField label="Page width" value="21.0 cm" width={97} />
        <PageSizeIcon high />
        <NumberField label="Page height" value="29.7 cm" width={97} />
      </PairStack>
    </PropertyGroup>
    <Separator $tall $space={6} />
    <ToolButton aria-label="Portrait" $width={24} $on><SheetIcon /></ToolButton>
    <ToolButton aria-label="Landscape"><SheetIcon wide /></ToolButton>
    <Separator $tall $space={5} />
    <ToolButton aria-label="All pages" $width={24} $on><AllPagesIcon /></ToolButton>
    <ToolButton aria-label="Current page"><ThisPageIcon /></ToolButton>
    <Separator $tall $space={8} />
    <PropertyGroup $gap={2}>
      <Label htmlFor="units">Units:</Label>
      <Select $width={92} id="units" options={["centimeters", "inches", "pixels"]} />
    </PropertyGroup>
    <Separator $tall $space={8} />
    <PropertyGroup $gap={2}>
      <NudgeIcon />
      <NumberField label="Nudge offset" value="0.01 cm" width={74} height={27} stacked />
    </PropertyGroup>
    <Separator $tall $space={9} />
    <PairStack>
      <DuplicateIcon axis="x" />
      <NumberField label="Duplicate x" value="0.5 cm" width={97} />
      <DuplicateIcon axis="y" />
      <NumberField label="Duplicate y" value="0.5 cm" width={97} />
    </PairStack>
  </Toolbar>
);

const ObjectProperties = () => {
  const widthRef = useRef(null);

  useEffect(() => {
    widthRef.current.focus();
    widthRef.current.select();
  }, []);

  return (
    <Docker>
      <DockerTitle>
        <h2>Object Properties</h2>
        <DockerButton aria-label="Collapse docker" $bare>
          <Icon w={10} h={10} stroke="#555" strokeWidth="1.500">
            <path d="M1 1L4 5L1 9M5 1L8 5L5 9" />
          </Icon>
        </DockerButton>
        <DockerButton aria-label="Roll up">
          <Icon w={11} h={12}>
            <path d="M0.500 6.500H10.500V10.500H0.500Z" fill="#fff" />
          </Icon>
        </DockerButton>
        <DockerButton aria-label="Close docker" $red>
          <Icon w={11} h={12} strokeWidth="4">
            <path d="M2 2L9 10M9 2L2 10" />
            <path d="M2 2L9 10M9 2L2 10" stroke="#fff" strokeWidth="2" />
          </Icon>
        </DockerButton>
      </DockerTitle>
      <DockerTabs>
        <ToolButton aria-label="Outline tab" $width={21} $on><NibIcon /></ToolButton>
        <ToolButton aria-label="Fill tab" $width={24}><BucketIcon /></ToolButton>
        <ToolButton aria-label="Scroll mode" $width={20}><PinIcon /></ToolButton>
      </DockerTabs>
      <DockerBody>
        <DockerContent>
          <Section>
            <SectionHead>
              <ChevronsUp />
              <h3>Outline</h3>
              <Mark type="checkbox" aria-label="Lock outline" />
            </SectionHead>
            <FormRow $height={31}>
              <Label htmlFor="outline-width">Width:</Label>
              <Field $width={87} $height={27}>
                <input id="outline-width" ref={widthRef} type="text" defaultValue="0.02 cm" />
                <ToolButton aria-label="Width list" $width={11}><Down /></ToolButton>
              </Field>
              <Select $width={86} label="Width units" options={["centimeters", "points"]} />
              <Mark type="checkbox" aria-label="Lock width" />
            </FormRow>
            <FormRow $height={31}>
              <Label htmlFor="outline-color">Color:</Label>
              <ColorCombo id="outline-color" $height={27}>
                <Swatch />
                <DropCap><Down /></DropCap>
              </ColorCombo>
              <span />
              <Mark type="checkbox" aria-label="Lock color" />
            </FormRow>
            <FormRow $height={32}>
              <Label htmlFor="outline-style">Style:</Label>
              <ColorCombo id="outline-style" $height={30}>
                <Swatch $line />
                <DropCap><Down /></DropCap>
              </ColorCombo>
              <ToolButton aria-label="Edit style" $width={20}>
                <Icon w={12} h={8} stroke="none">
                  <path d="M1 5H3V7H1ZM5 5H7V7H5ZM9 5H11V7H9Z" fill="#34324e" />
                </Icon>
              </ToolButton>
              <Mark type="checkbox" aria-label="Lock style" />
            </FormRow>
            <Rule $space={4} />
            <StrokeOptions>
              <MiterRow>
                <MiterIcon />
                <NumberField label="Miter limit" value="5.0" width={82} height={29} stacked />
                <Mark type="checkbox" aria-label="Lock miter limit" />
              </MiterRow>
              <JoinRow>
                <ToolButton aria-label="Mitered corners" $on><JoinIcon kind={0} /></ToolButton>
                <ToolButton aria-label="Round corners"><JoinIcon kind={1} /></ToolButton>
                <ToolButton aria-label="Beveled corners"><JoinIcon kind={2} /></ToolButton>
                <Mark type="checkbox" aria-label="Lock corners" />
              </JoinRow>
              <JoinRow>
                <ToolButton aria-label="Square cap" $on><CapIcon kind={0} /></ToolButton>
                <ToolButton aria-label="Round cap"><CapIcon kind={1} /></ToolButton>
                <ToolButton aria-label="Extended cap"><CapIcon kind={2} /></ToolButton>
                <Mark type="checkbox" aria-label="Lock caps" />
              </JoinRow>
            </StrokeOptions>
            <Expander aria-label="More outline options"><Down /></Expander>
          </Section>
          <Section>
            <SectionHead>
              <ChevronsUp />
              <h3>Fill</h3>
              <Mark type="checkbox" aria-label="Lock fill" />
            </SectionHead>
            <FillRow>
              <ToolButton aria-label="No fill" $width={24} $on><FillIcon kind="none" /></ToolButton>
              <ToolButton aria-label="Uniform fill" $width={25}><FillIcon kind="uniform" /></ToolButton>
              <ToolButton aria-label="Fountain fill" $width={25}><FillIcon kind="fountain" /></ToolButton>
              <ToolButton aria-label="Pattern fill" $width={25}><FillIcon kind="pattern" /></ToolButton>
              <ToolButton aria-label="Texture fill" $width={25}><FillIcon kind="texture" /></ToolButton>
              <ToolButton aria-label="PostScript fill" $width={25}><FillIcon kind="ps" /></ToolButton>
              <Mark type="checkbox" aria-label="Lock fill type" />
            </FillRow>
            <Rule $space={4} />
            <Note>The object has no fill.</Note>
          </Section>
        </DockerContent>
        <DockerScroll>
          <Up color="#777" />
        </DockerScroll>
      </DockerBody>
    </Docker>
  );
};

// ===== Main Component =====

const CorelDraw = () => (
  <App>
    <GlobalStyle />
    <TitleBar>
      <TabGhosts width="1000" height="25" aria-hidden="true">
        <defs>
          <filter id="soft" x="-10%" y="-50%" width="120%" height="200%">
            <feGaussianBlur stdDeviation="3" />
          </filter>
        </defs>
        <g filter="url(#soft)">
          <path d="M-10 -5H190L198 30H-10Z" fill="#b4cde8" />
          <path d="M206 0H382L392 30H198Z" fill="#7ea2cc" />
          <path d="M402 0H572L582 30H394Z" fill="#86abd5" />
          <path d="M590 0H768L780 30H580Z" fill="#b3d3f6" />
          <path d="M784 6H806L812 22H788Z" fill="#a2c3e8" />
          <path d="M209 7H218V21H209Z" fill="#1d4f96" />
          <path d="M228 9H345V19H228ZM430 9H550V19H430Z" fill="#6b8fb9" />
          <path d="M402 6H414V21H402Z" fill="#b98f8c" />
          <path d="M595 5H608V21H595Z" fill="#9d4a58" />
          <path d="M614 9H742V19H614Z" fill="#7f9fc4" />
          <path d="M373 11H380V18H373ZM567 11H574V18H567ZM758 11H765V18H758Z" fill="#4f759f" />
        </g>
      </TabGhosts>
      <AppTitle>
        <CorelLogo />
        CorelDRAW X6 - [Untitled-1]
      </AppTitle>
      <WindowButtons>
        <WindowButton aria-label="Minimize">
          <Icon w={12} h={14} stroke="#445">
            <path d="M0.500 8.500H11.500V12.500H0.500Z" fill="#fff" />
          </Icon>
        </WindowButton>
        <WindowButton aria-label="Restore">
          <Icon w={12} h={16} stroke="#445">
            <path d="M3.500 0.500H11.500V11.500H3.500Z" fill="#fff" />
            <path d="M0.500 3.500H8.500V13.500H0.500Z" fill="#fff" />
            <path d="M3.500 7.500H5.500V10.500H3.500Z" fill="#68809c" />
          </Icon>
        </WindowButton>
        <WindowButton aria-label="Close" $close>
          <Icon w={12} h={14} stroke="#445" strokeWidth="5">
            <path d="M2 2L10 12M10 2L2 12" />
            <path d="M2 2L10 12M10 2L2 12" stroke="#fff" strokeWidth="3" />
          </Icon>
        </WindowButton>
      </WindowButtons>
    </TitleBar>
    <MenuBar>
      <CorelLogo w={12} h={20} notch />
      <MenuItems>
        {MENUS.map(([before, key, after]) => (
          <MenuItem key={before + key + after}>
            {before}
            <u>{key}</u>
            {after}
          </MenuItem>
        ))}
      </MenuItems>
      <DocumentButton aria-label="Minimize document">
        <Icon w={8} h={10} stroke="none">
          <path d="M0 6H8V9H0Z" fill="#bdbdbd" />
        </Icon>
      </DocumentButton>
      <DocumentButton aria-label="Restore document">
        <Icon w={8} h={12} stroke="#bdbdbd">
          <path d="M2.500 0.500H7.500V7" />
          <path d="M1 3H5V9H1Z" strokeWidth="2" />
        </Icon>
      </DocumentButton>
    </MenuBar>
    <StandardBar />
    <PropertyBar />
    <WorkArea>
      <Toolbox>
        {TOOLS.map(([name, glyph, flyout], i) => (
          <Tool key={name} aria-label={name} $on={i === 0}>
            <ToolIcon flyout={flyout}>{glyph}</ToolIcon>
          </Tool>
        ))}
      </Toolbox>
      <Drawing>
        <HorizontalRuler>
          <RulerX />
        </HorizontalRuler>
        <VerticalRuler>
          <RulerY />
        </VerticalRuler>
        <Canvas>
          <Paper />
        </Canvas>
        <ScrollTrack>
          <Up color="#444" />
          <ScrollThumb>
            <Icon w={7} h={10} stroke="#666">
              <path d="M0 1.500H7M0 4.500H7M0 7.500H7" />
            </Icon>
          </ScrollThumb>
        </ScrollTrack>
      </Drawing>
      <ObjectProperties />
      <Palette colors={DOCUMENT_COLORS} spots />
      <Palette colors={DEFAULT_COLORS} divided />
    </WorkArea>
    <ToolboxFrame />
    <Callout>
      <svg width="210" height="142" fill="none" stroke="#ed1c24" strokeWidth="5" strokeLinejoin="miter" aria-hidden="true">
        <path d="M8 71L106 5V36H205V105H106V137Z" />
      </svg>
      <span>Tools</span>
    </Callout>
  </App>
);

export default CorelDraw;
